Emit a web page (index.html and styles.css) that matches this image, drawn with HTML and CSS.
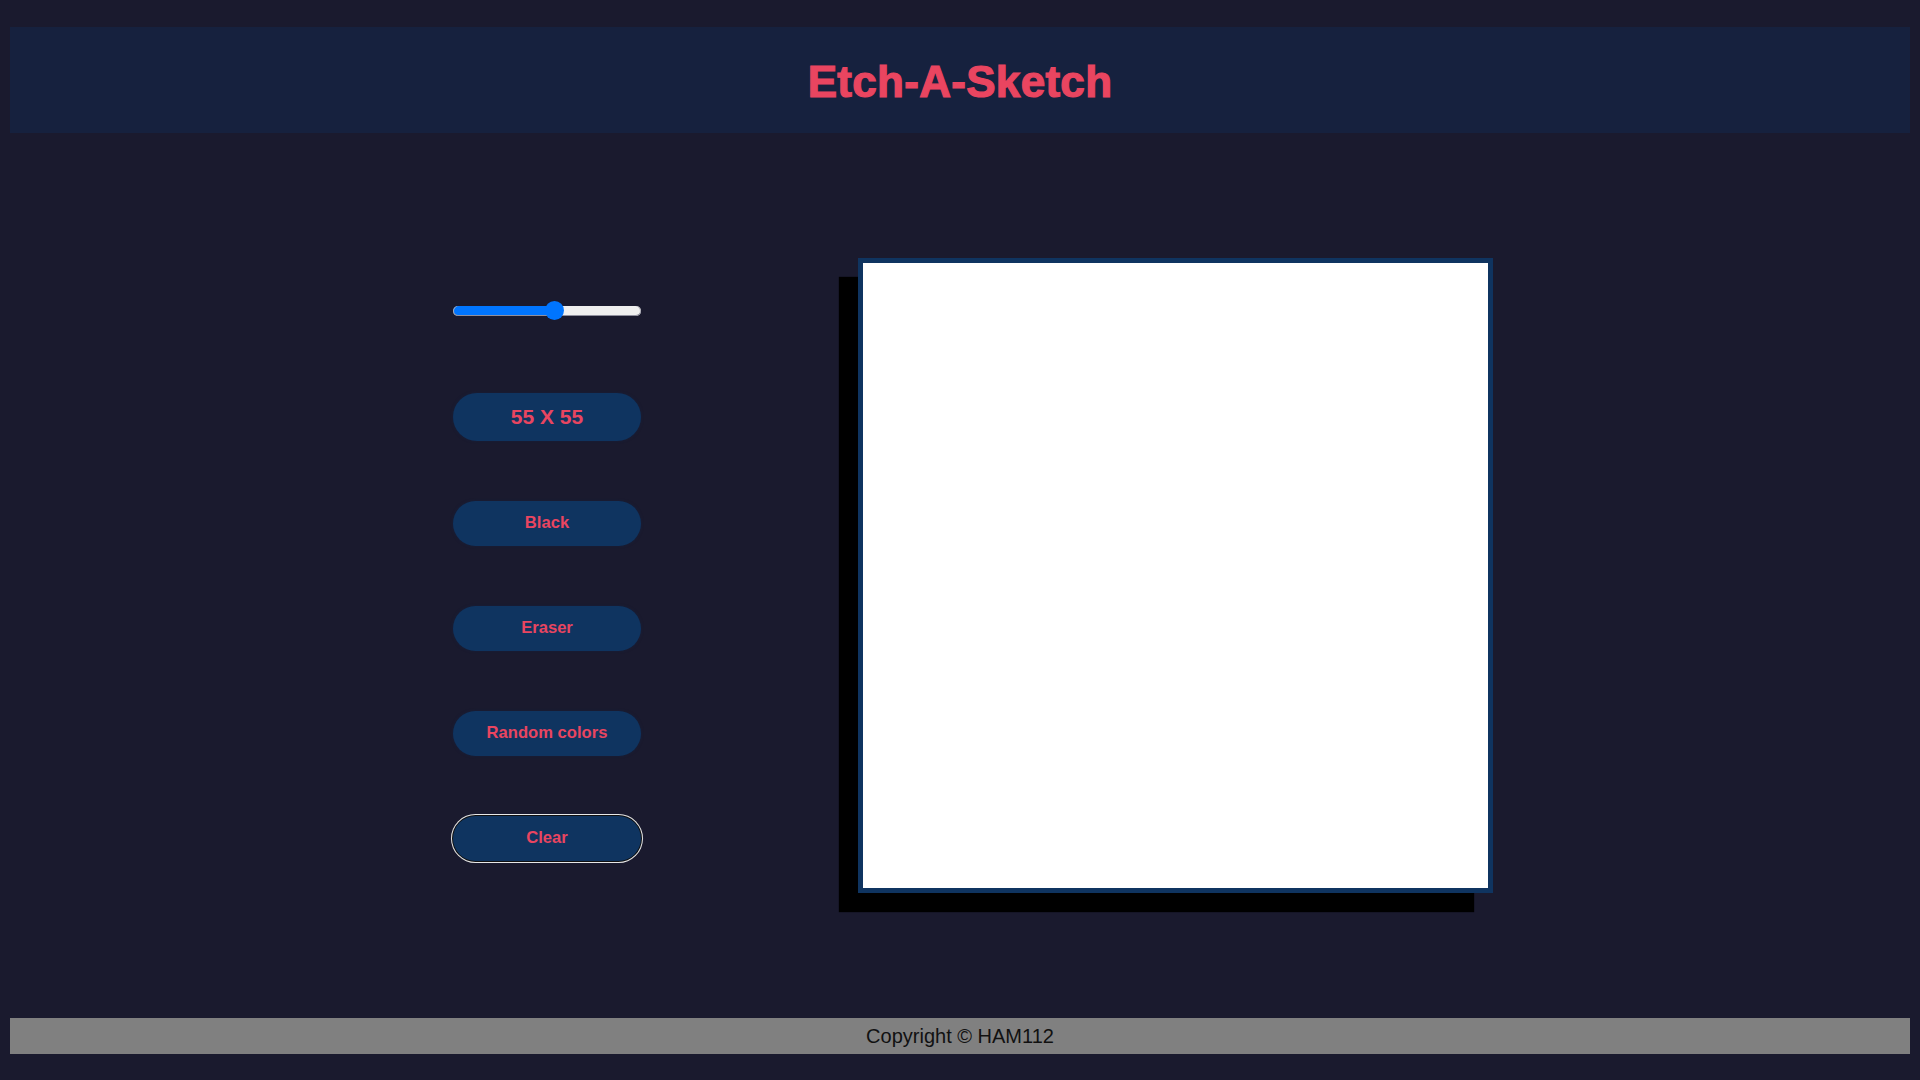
FILE: index.html
```html
<!DOCTYPE html>
<html lang="en">
<head>
<meta charset="utf-8">
<title>Etch-A-Sketch</title>
<link rel="stylesheet" href="styles.css">
</head>
<body>
<header class="header">
  <h1 class="title">Etch-A-Sketch</h1>
</header>
<main class="main">
  <div class="controls">
    <div class="slider-wrap">
      <input class="slider" type="range" min="1" max="100" value="55" style="--fill: 54.5%">
    </div>
    <button class="btn btn-size">55 X 55</button>
    <button class="btn">Black</button>
    <button class="btn">Eraser</button>
    <button class="btn">Random colors</button>
    <button class="btn btn-focus">Clear</button>
  </div>
  <div class="board"></div>
</main>
<footer class="footer">Copyright © HAM112</footer>
</body>
</html>
```

FILE: styles.css
```css
* { box-sizing: border-box; }
html, body {
  margin: 0;
  padding: 0;
  background: #1a1a2e;
  font-family: "Liberation Sans", Arial, sans-serif;
}
body {
  height: 1080px;
  padding: 27px 10px 0;
  display: flex;
  flex-direction: column;
}
.header {
  height: 106px;
  background: #16213e;
  display: flex;
  align-items: center;
  justify-content: center;
}
.title {
  margin: 0;
  font-size: 44px;
  font-weight: 700;
  color: #e94560;
  line-height: 1;
  padding-top: 4px;
  -webkit-text-stroke: 1.2px #e94560;
  letter-spacing: 0.3px;
}
.main {
  height: 885px;
  display: flex;
  align-items: center;
  justify-content: center;
  gap: 217px;
  padding-left: 26px;
}
.controls {
  width: 188px;
  display: flex;
  flex-direction: column;
  gap: 60px;
  margin-top: -2px;
}
.slider-wrap {
  height: 44px;
  display: flex;
  align-items: center;
}
.slider {
  -webkit-appearance: none;
  appearance: none;
  width: 189px;
  height: 10px;
  margin: 0;
  border-radius: 5px;
  background: linear-gradient(to right, #0075ff 0, #0075ff var(--fill), #efefef var(--fill), #efefef 100%);
  box-shadow: inset 0 -1px 0 #8f8f9d, inset 1px 0 0 #b0b0b8, inset -1px 0 0 #b0b0b8;
  outline: none;
}
.slider::-webkit-slider-thumb {
  -webkit-appearance: none;
  appearance: none;
  width: 19px;
  height: 19px;
  border-radius: 50%;
  background: #0075ff;
  border: none;
}
.btn {
  width: 188px;
  height: 45px;
  border: none;
  border-radius: 23px;
  background: #0f3460;
  color: #e94560;
  font-family: "Liberation Sans", Arial, sans-serif;
  font-weight: 700;
  font-size: 16.6px;
  box-shadow: 0 0 3px rgba(22, 33, 62, 0.9);
  padding: 0;
}
.btn-size {
  height: 48px;
  border-radius: 24px;
  font-size: 21px;
}
.btn-focus {
  box-shadow: 0 0 0 1px #101010, 0 0 0 2px #e8e8e8;
}
.board {
  width: 635px;
  height: 635px;
  background: #fff;
  border: 5px solid #0f3460;
  box-shadow: -19px 19px 1px #000;
}
.footer {
  height: 36px;
  margin-top: 0;
  background: #808080;
  color: #111;
  font-size: 20px;
  display: flex;
  align-items: center;
  justify-content: center;
}
```
